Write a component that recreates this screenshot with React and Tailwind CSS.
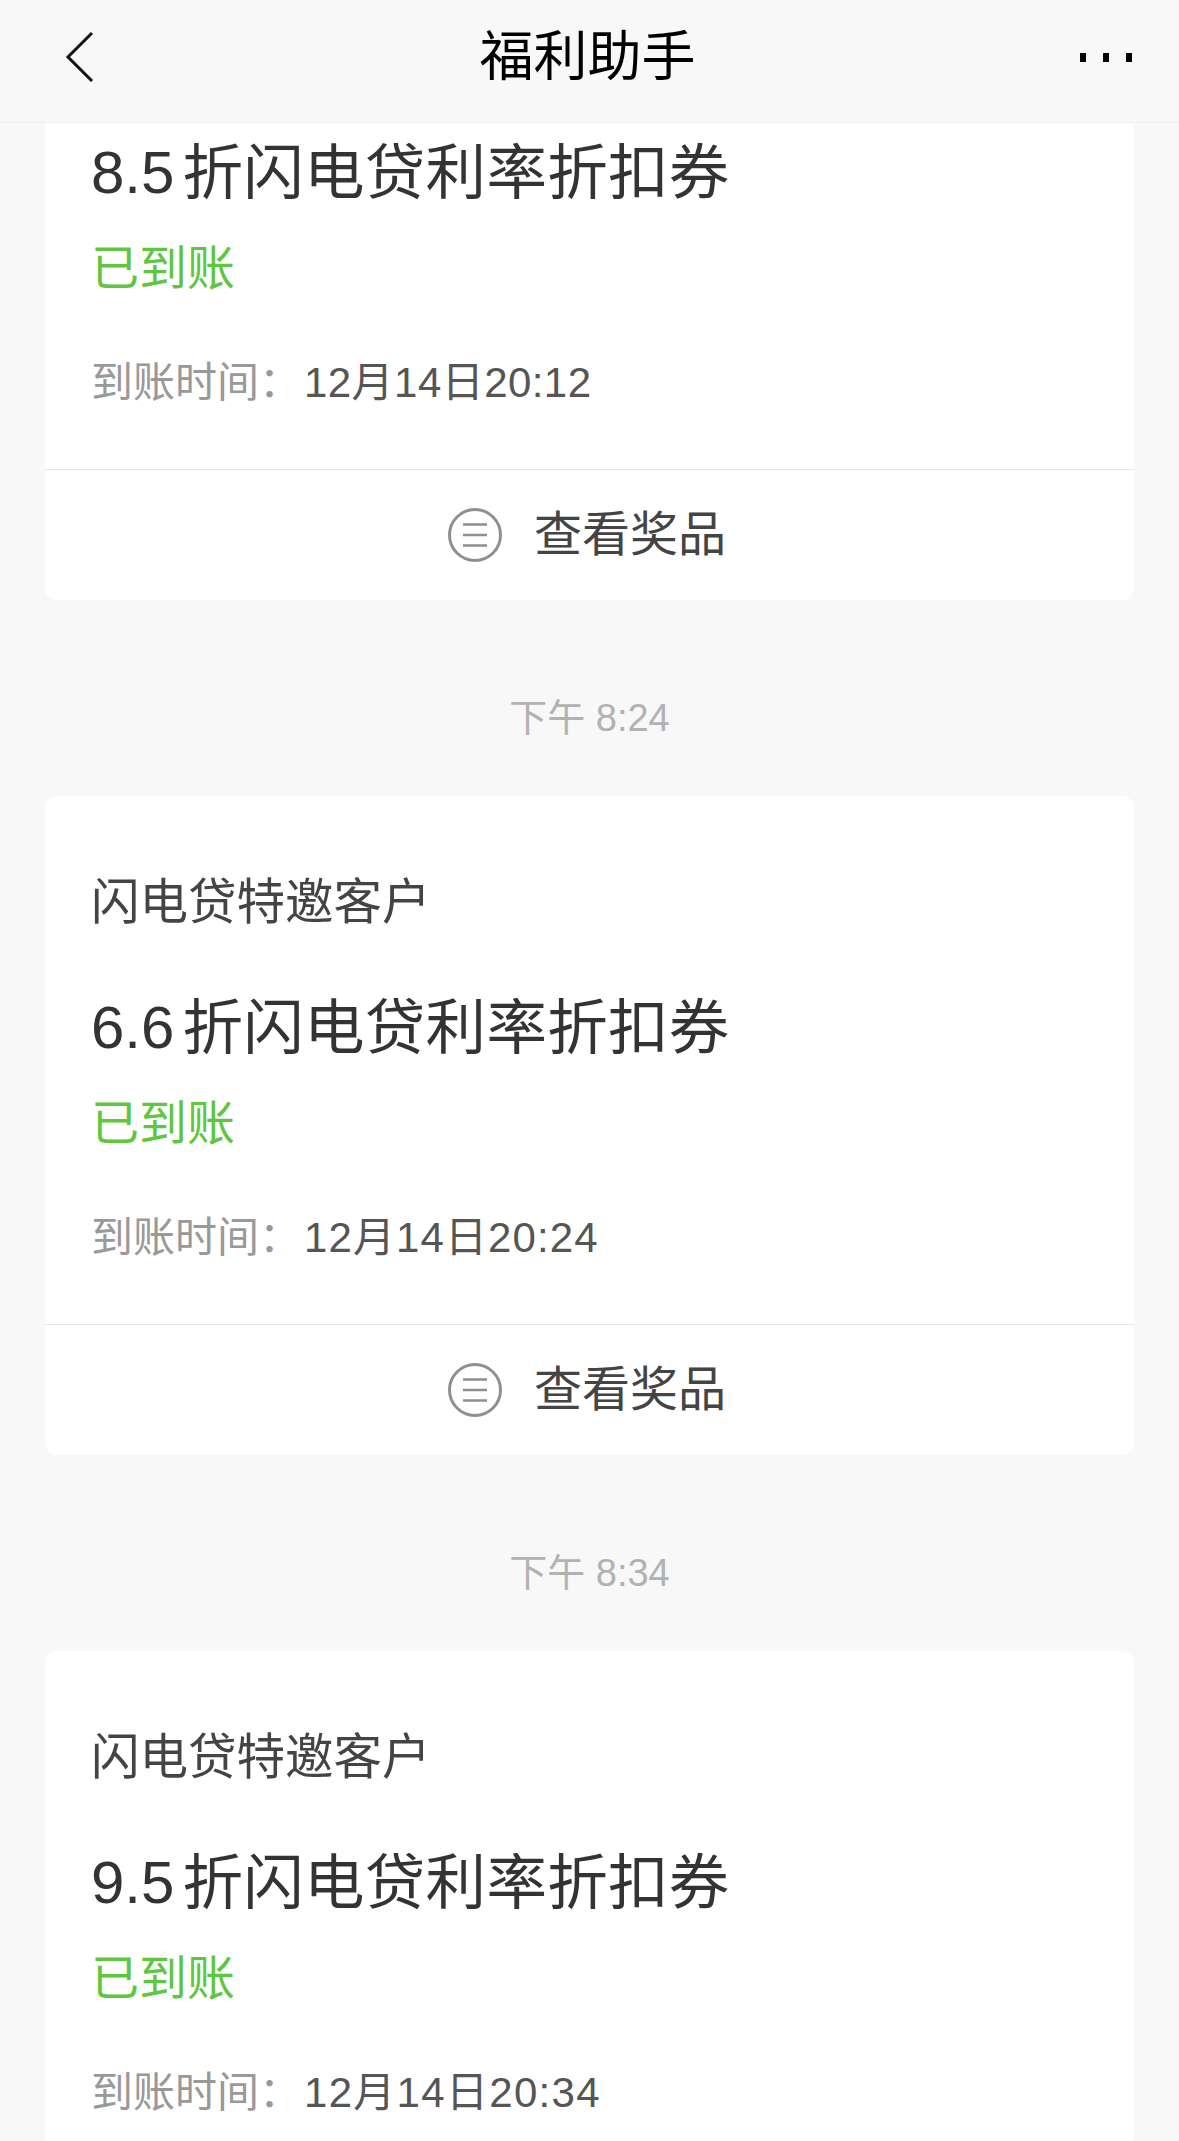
import React from "react";

const FONT = "font-['Liberation_Sans','Noto_Sans_CJK_SC',sans-serif]";

function ListIcon() {
  return (
    <svg width="54" height="54" viewBox="0 0 54 54" fill="none" stroke="#8f8f8f" strokeWidth="3">
      <circle cx="27" cy="27" r="25.5" />
      <path d="M15 16.5h24M15 27h24M15 37.5h24" strokeWidth="2.6" />
    </svg>
  );
}

// the last card runs off the bottom of the screen, so it has no footer
function Card({ discount, time, timeClass, noHead, last }) {
  return (
    <div className={`mx-[45px] bg-white ${noHead ? "rounded-b-xl" : "rounded-t-xl"} ${!noHead && !last ? "rounded-b-xl" : ""}`}>
      <div className={`px-[46px] ${noHead ? "pt-[16px]" : "pt-[74px]"} pb-[56px]`}>
        {!noHead && <div className="text-[48.5px] leading-[64px] text-[#444444]">闪电贷特邀客户</div>}
        <div className={`${noHead ? "" : "mt-[60px]"} flex text-[60px] leading-[68px] text-[#333333]`}>
          <span>{discount}</span>
          <span className="ml-[8px] text-[60.5px] tracking-[0.3px]">折闪电贷利率折扣券</span>
        </div>
        <div className="mt-[30px] text-[48px] leading-[64px] text-[#5fc63f]">已到账</div>
        <div className="mt-[52px] flex items-center text-[42px] leading-[60px]">
          <span className="w-[213px] shrink-0 text-[#999999]">到账时间：</span>
          <span className={`text-[#555555] ${timeClass}`}>{time}</span>
        </div>
      </div>
      {!last && (
        <div className="flex h-[131px] items-center justify-center gap-[32px] border-t border-[#e5e5e5] pr-[5px]">
          <ListIcon />
          <span className="text-[48px] text-[#444444]">查看奖品</span>
        </div>
      )}
    </div>
  );
}

function Stamp({ children }) {
  return <div className="flex h-[196px] items-center justify-center pt-[40px] text-[38px] text-[#b2b2b2]">{children}</div>;
}

export default function App() {
  return (
    <div className={`h-[2141px] overflow-hidden bg-[#f8f8f8] ${FONT}`}>
      <div className="flex h-[123px] items-center justify-between border-b border-[#efefef] bg-[#f8f8f8] pb-[8px] pl-[65px] pr-[47px]">
        <svg width="30" height="52" viewBox="0 0 30 52" fill="none" stroke="#111111" strokeWidth="3">
          <path d="M27 2 3 26l24 24" />
        </svg>
        <div className="text-[54px] text-black">福利助手</div>
        <div className="flex gap-[17px]">
          <span className="h-[9px] w-[6px] bg-black" />
          <span className="h-[9px] w-[6px] bg-black" />
          <span className="h-[9px] w-[6px] bg-black" />
        </div>
      </div>
      <Card noHead discount="8.5" time="12月14日20:12" timeClass="tracking-[0.45px]" />
      <Stamp>下午 8:24</Stamp>
      <Card discount="6.6" time="12月14日20:24" timeClass="tracking-[1.1px]" />
      <Stamp>下午 8:34</Stamp>
      <Card last discount="9.5" time="12月14日20:34" timeClass="tracking-[1.3px]" />
    </div>
  );
}
